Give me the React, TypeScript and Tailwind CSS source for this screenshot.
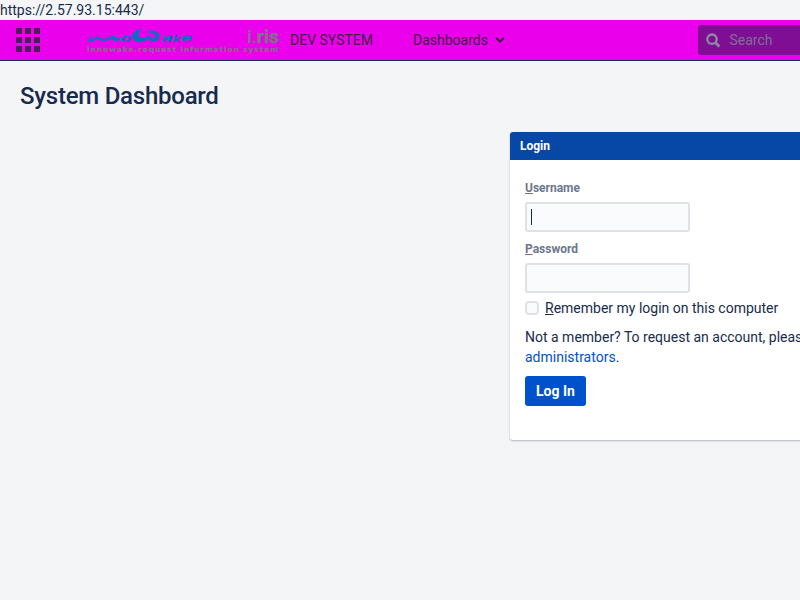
import React from "react";

const cells = [0, 9, 18];

function AppGrid() {
  return (
    <svg width="24" height="24" viewBox="0 0 24 24" fill="#4d1d5c" shapeRendering="crispEdges">
      {cells.map((y) => cells.map((x) => <rect key={`${x}-${y}`} x={x} y={y} width="6" height="6" />))}
    </svg>
  );
}

function Logo() {
  return (
    <svg width="194" height="36" viewBox="0 -5 194 36" className="block">
      <g fill="#0870bd">
        <path d="M0.5 14 C2 12 3 10 6 9 L4 14 C8 10 10 8.5 13 10.5 C15 12 17 12.5 20 11 L24 9 C27 8.5 29 10.5 31 11 C32.5 11.5 33 11 34 10.5 C32 14 29 15 26 13 C24 11 22 12 19 14 C16 15 14 14 12 12.5 C10 11 8 12.5 6 14.5 L2 15 Z" />
        <path d="M55 2 C49 2.5 45 5.5 45 9.5 C45.5 14 50 16 55 15 C58 14.5 60 13 61.5 11.5 C63 14.5 66 15.5 69 14 C73 12 74 7.500 70 5 C66 3 62 3 58 5.500 C63 4.800 67.5 6.500 68.5 9 C69 11 66.5 12 64.5 10.500 C63.5 10 63 9 62.5 8 C59 11 55 12 52.500 10 C50.500 8 51.500 5 55 2 Z" />
      </g>
      <g fill="#0870bd" fontFamily="DejaVu Sans, sans-serif" fontStyle="italic">
        <text x="33" y="14.5" fontSize="10" fontWeight="700" textLength="11" lengthAdjust="spacingAndGlyphs">o</text>
        <text x="74" y="14.5" fontSize="11.5" stroke="#0870bd" strokeWidth="0.4" textLength="31" lengthAdjust="spacingAndGlyphs">
          a<tspan fontSize="9">k</tspan>e
        </text>
      </g>
      <g fill="#856d91" fontFamily="Roboto, sans-serif">
        <text x="160" y="15.5" fontSize="19" stroke="#856d91" strokeWidth="0.5" textLength="32" lengthAdjust="spacingAndGlyphs">
          i.<tspan fontWeight="700">ris</tspan>
        </text>
        <text x="0" y="25" fontSize="7.5" fontWeight="700" fontFamily="DejaVu Sans, sans-serif" textLength="191" lengthAdjust="spacing" stroke="#856d91" strokeWidth="0.15">
          innowake.request information system
        </text>
      </g>
    </svg>
  );
}

export default function App() {
  return (
    <div className="h-[600px] w-[800px] overflow-hidden bg-[#f4f5f7] font-['Roboto',sans-serif] text-sm leading-5 text-[#172b4d]">
      <div className="h-5">https://2.57.93.15:443/</div>
      <header className="flex h-[41px] items-center border-b border-[#172b4d] bg-[#eb00eb] text-[#422042]">
        <div className="ml-4"><AppGrid /></div>
        <div className="ml-[47px]"><Logo /></div>
        <span className="ml-[9px] w-[123px] whitespace-nowrap">DEV SYSTEM</span>
        <span>Dashboards</span>
        <svg className="ml-[7px]" width="10" height="8" viewBox="0 0 10 8" fill="none" stroke="#422042" strokeWidth="2.2">
          <path d="M1.2 2 L5 5.6 L8.8 2" />
        </svg>
        <div className="ml-auto flex h-[30px] w-[102px] items-center rounded-l-[3px] bg-[#7f0e94] pl-2 text-[#7d7094]">
          <svg width="15" height="15" viewBox="0 0 15 15" fill="none" stroke="#8a8d9f">
            <circle cx="6" cy="6.2" r="4.7" strokeWidth="2.3" />
            <path d="M9.6 9.8 L13.3 13.5" strokeWidth="2.7" />
          </svg>
          <span className="ml-[8.5px]">Search</span>
        </div>
      </header>
      <h1 className="ml-5 mt-[21px] text-2xl font-medium leading-7 tracking-[-0.24px]">System Dashboard</h1>
      <section className="ml-[510px] mt-[22px] h-[308px] w-[480px] rounded-[3px] bg-white shadow-[0_1px_2px_rgba(9,30,66,0.3)]">
        <h2 className="h-7 rounded-t-[3px] bg-[#0747a6] pl-2.5 text-xs font-bold leading-7 text-white">Login</h2>
        <form className="pl-[15px] pt-[18px]">
          <label className="block text-xs font-bold leading-5 text-[#6b778c]"><u>U</u>sername</label>
          <div className="mt-1 flex h-[30px] w-[165px] items-center rounded-[3px] border-2 border-[#dfe1e6] bg-[#fafbfc] pl-1">
            <span className="h-4 w-px bg-[#172b4d]" />
          </div>
          <label className="mt-[7px] block text-xs font-bold leading-5 text-[#6b778c]"><u>P</u>assword</label>
          <div className="mt-1 h-[30px] w-[165px] rounded-[3px] border-2 border-[#dfe1e6] bg-[#fafbfc]" />
          <div className="mt-[5px] flex items-center">
            <span className="h-3.5 w-3.5 rounded-[4px] border-2 border-[#dfe1e6] bg-[#fafbfc]" />
            <span className="ml-1.5"><u>R</u>emember my login on this computer</span>
          </div>
          <p className="mt-[9px] w-[450px] whitespace-nowrap">
            Not a member? To request an account, please contact your Jira<br />
            <a className="text-[#0052cc]">administrators</a>.
          </p>
          <button type="button" className="mt-[9px] block h-[30px] w-[61px] rounded-[3px] bg-[#0052cc] font-bold text-white">Log In</button>
        </form>
      </section>
    </div>
  );
}
